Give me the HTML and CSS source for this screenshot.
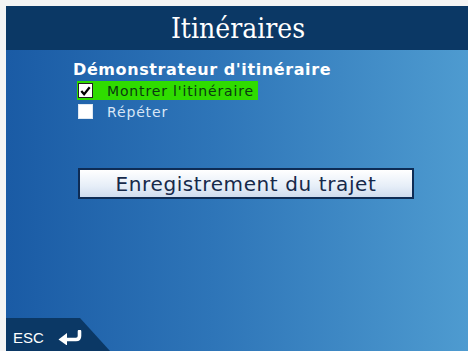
FILE: index.html
```html
<!DOCTYPE html>
<html lang="fr">
<head>
<meta charset="utf-8">
<link rel="stylesheet" href="styles.css">
</head>
<body>
<div class="frame">
  <div class="screen">
    <header class="header"><h1 class="title">Itinéraires</h1></header>
    <main class="main">
      <div class="content">
        <div class="group-label">Démonstrateur d'itinéraire</div>
        <div class="option selected">
          <span class="box"><svg viewBox="0 0 14 14" width="14" height="14"><path d="M2.5 7 L5.5 10.5 L11.5 3" fill="none" stroke="#000" stroke-width="2.4"/></svg></span>
          <span class="opt-text">Montrer l'itinéraire</span>
        </div>
        <div class="option plain">
          <span class="box"></span>
          <span class="opt-text">Répéter</span>
        </div>
        <button class="btn">Enregistrement du trajet</button>
      </div>
      <div class="footer">
        <div class="esc">
          <span class="esc-text">ESC</span>
          <svg class="esc-icon" viewBox="0 0 25 15" width="25" height="15"><path d="M21.5 1.5 V6 Q21.5 9.5 18 9.5 H8" fill="none" stroke="#fff" stroke-width="3.6" stroke-linecap="round"/><path d="M0.5 9.5 L9 3 V15.5 Z" fill="#fff"/></svg>
        </div>
      </div>
    </main>
  </div>
</div>
</body>
</html>
```
FILE: styles.css
```css
html, body {
  margin: 0;
  padding: 0;
  width: 468px;
  height: 351px;
  overflow: hidden;
  background: #f4f4f4;
}
.frame {
  padding: 6px 0 0 6px;
  height: 351px;
  box-sizing: border-box;
}
.screen {
  height: 100%;
  display: flex;
  flex-direction: column;
}
.header {
  height: 44px;
  background: #0b3865;
  display: flex;
  align-items: center;
  justify-content: center;
}
.title {
  margin: 0;
  font-family: "DejaVu Serif Condensed", "DejaVu Serif", serif;
  font-weight: normal;
  font-size: 28px;
  color: #fff;
  padding-left: 2px;
}
.main {
  flex: 1;
  display: flex;
  flex-direction: column;
  background: linear-gradient(90deg, #1a5ba5 0%, #2e75b8 45%, #4e9bd0 100%);
}
.content {
  flex: 1;
  padding: 11px 0 0 67px;
  font-family: "DejaVu Sans", sans-serif;
}
.group-label {
  color: #fff;
  font-weight: bold;
  font-size: 16px;
  line-height: 18px;
  letter-spacing: 0.6px;
}
.option {
  display: flex;
  align-items: center;
  height: 19px;
  margin-left: 4px;
  width: 180px;
  padding-left: 1px;
}
.option.selected {
  background: #2fdc00;
  margin-top: 2px;
}
.option.plain { margin-top: 2px; }
.box {
  width: 15px;
  height: 15px;
  background: #fff;
  box-sizing: border-box;
  border: 1px solid #222;
  display: flex;
  align-items: center;
  justify-content: center;
}
.box svg { display: block; }
.plain .box { border-color: #dfe8f2; }
.opt-text {
  margin-left: 14px;
  font-size: 14px;
  color: #d8e6f6;
  letter-spacing: 0.85px;
}
.selected .opt-text { color: #0a3a10; }
.btn {
  display: block;
  margin: 47px 0 0 5px;
  width: 336px;
  height: 31px;
  border: 2px solid #0e2c55;
  background: linear-gradient(180deg, #ffffff 0%, #e6eef8 60%, #cfdcee 100%);
  font-family: "DejaVu Sans", sans-serif;
  font-size: 20px;
  color: #16294a;
  padding: 0;
  letter-spacing: 0.6px;
}
.footer {
  height: 33px;
  display: flex;
  align-items: flex-end;
}
.esc {
  width: 104px;
  height: 33px;
  background: #0b3865;
  clip-path: polygon(0 0, 74px 0, 104px 33px, 0 33px);
  display: flex;
  align-items: center;
  padding-top: 5px;
  box-sizing: border-box;
}
.esc-text {
  font-family: "Liberation Sans", sans-serif;
  color: #fff;
  font-size: 15px;
  margin-left: 7px;
}
.esc-icon { margin-left: 14px; }
```
